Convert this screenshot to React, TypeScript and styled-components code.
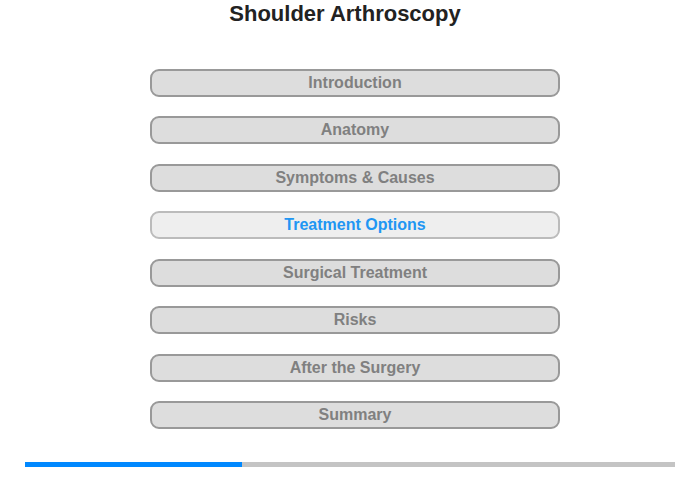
import React from "react";
import styled, { createGlobalStyle } from "styled-components";

const Global = createGlobalStyle`
  html, body { margin: 0; padding: 0; background: #fff; }
  body { font-family: "Liberation Sans", Arial, sans-serif; }
`;

const Page = styled.div`
  width: 700px;
  height: 480px;
  display: flex;
  flex-direction: column;
  align-items: center;
  box-sizing: border-box;
  padding-top: 1px;
`;

const Title = styled.h1`
  margin: 0 10px 0 0;
  font-size: 22px;
  line-height: 25px;
  font-weight: bold;
  color: #222;
`;

const Menu = styled.nav`
  margin: 43px 0 0 10px;
  display: flex;
  flex-direction: column;
  gap: 19.45px;
`;

const Item = styled.div<{ $active?: boolean }>`
  width: 410px;
  height: 28px;
  box-sizing: border-box;
  border: 2px solid ${(p) => (p.$active ? "#bbbbbb" : "#999999")};
  border-radius: 9px;
  background: ${(p) => (p.$active ? "#eeeeee" : "#dddddd")};
  color: ${(p) => (p.$active ? "#2196f3" : "#808080")};
  font-size: 16px;
  font-weight: bold;
  line-height: 24px;
  text-align: center;
`;

const Progress = styled.div`
  margin-top: 33px;
  width: 650px;
  height: 5px;
  background: #c4c4c4;
  display: flex;
`;

const Fill = styled.div`
  height: 100%;
  background: #0088ff;
`;

const items = [
  "Introduction",
  "Anatomy",
  "Symptoms & Causes",
  "Treatment Options",
  "Surgical Treatment",
  "Risks",
  "After the Surgery",
  "Summary",
];

export default function App() {
  const active = 3;
  return (
    <>
      <Global />
      <Page>
        <Title>Shoulder Arthroscopy</Title>
        <Menu>
          {items.map((t, i) => (
            <Item key={t} $active={i === active}>
              {t}
            </Item>
          ))}
        </Menu>
        <Progress>
          <Fill style={{ width: `${(217 / 650) * 100}%` }} />
        </Progress>
      </Page>
    </>
  );
}
